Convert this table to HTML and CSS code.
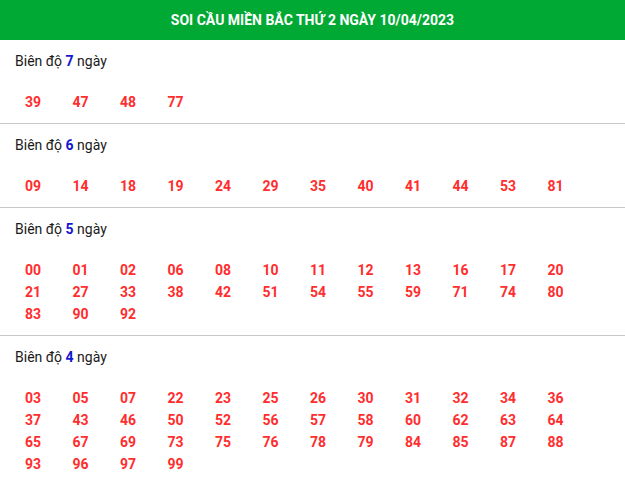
FILE: index.html
```html
<!DOCTYPE html>
<html lang="vi">
<head>
<meta charset="utf-8">
<title>Soi cầu miền Bắc</title>
<link rel="stylesheet" href="styles.css">
</head>
<body>
<div class="box">
  <h2 class="head">SOI CẦU MIỀN BẮC THỨ 2 NGÀY 10/04/2023</h2>
  <div class="sec">
    <div class="ttl">Biên độ <b>7</b> ngày</div>
    <div class="nums"><span>39</span><span>47</span><span>48</span><span>77</span></div>
  </div>
  <div class="sec">
    <div class="ttl">Biên độ <b>6</b> ngày</div>
    <div class="nums"><span>09</span><span>14</span><span>18</span><span>19</span><span>24</span><span>29</span><span>35</span><span>40</span><span>41</span><span>44</span><span>53</span><span>81</span></div>
  </div>
  <div class="sec">
    <div class="ttl">Biên độ <b>5</b> ngày</div>
    <div class="nums"><span>00</span><span>01</span><span>02</span><span>06</span><span>08</span><span>10</span><span>11</span><span>12</span><span>13</span><span>16</span><span>17</span><span>20</span><span>21</span><span>27</span><span>33</span><span>38</span><span>42</span><span>51</span><span>54</span><span>55</span><span>59</span><span>71</span><span>74</span><span>80</span><span>83</span><span>90</span><span>92</span></div>
  </div>
  <div class="sec">
    <div class="ttl">Biên độ <b>4</b> ngày</div>
    <div class="nums"><span>03</span><span>05</span><span>07</span><span>22</span><span>23</span><span>25</span><span>26</span><span>30</span><span>31</span><span>32</span><span>34</span><span>36</span><span>37</span><span>43</span><span>46</span><span>50</span><span>52</span><span>56</span><span>57</span><span>58</span><span>60</span><span>62</span><span>63</span><span>64</span><span>65</span><span>67</span><span>69</span><span>73</span><span>75</span><span>76</span><span>78</span><span>79</span><span>84</span><span>85</span><span>87</span><span>88</span><span>93</span><span>96</span><span>97</span><span>99</span></div>
  </div>
</div>
</body>
</html>
```
FILE: styles.css
```css
html, body {
  margin: 0;
  padding: 0;
  background: #fff;
}
body {
  font-family: Roboto, "Liberation Sans", sans-serif;
  font-size: 14px;
  color: #222;
}
.head {
  margin: 0;
  height: 40px;
  background: #00a933;
  color: #fff;
  font-size: 14px;
  font-weight: 700;
  display: flex;
  align-items: center;
  justify-content: center;
}
.sec {
  padding: 11px 0 10px;
  border-bottom: 1px solid #c8c8c8;
}
.ttl {
  padding-left: 15px;
  line-height: 20px;
  margin-bottom: 20px;
  color: #1a1a1a;
}
.ttl b {
  color: #1414d2;
  font-weight: 700;
}
.nums {
  display: grid;
  grid-template-columns: repeat(12, 47.5px);
  padding-left: 25px;
}
.nums span {
  line-height: 22px;
  font-weight: 700;
  color: #ff2d2d;
}
```
